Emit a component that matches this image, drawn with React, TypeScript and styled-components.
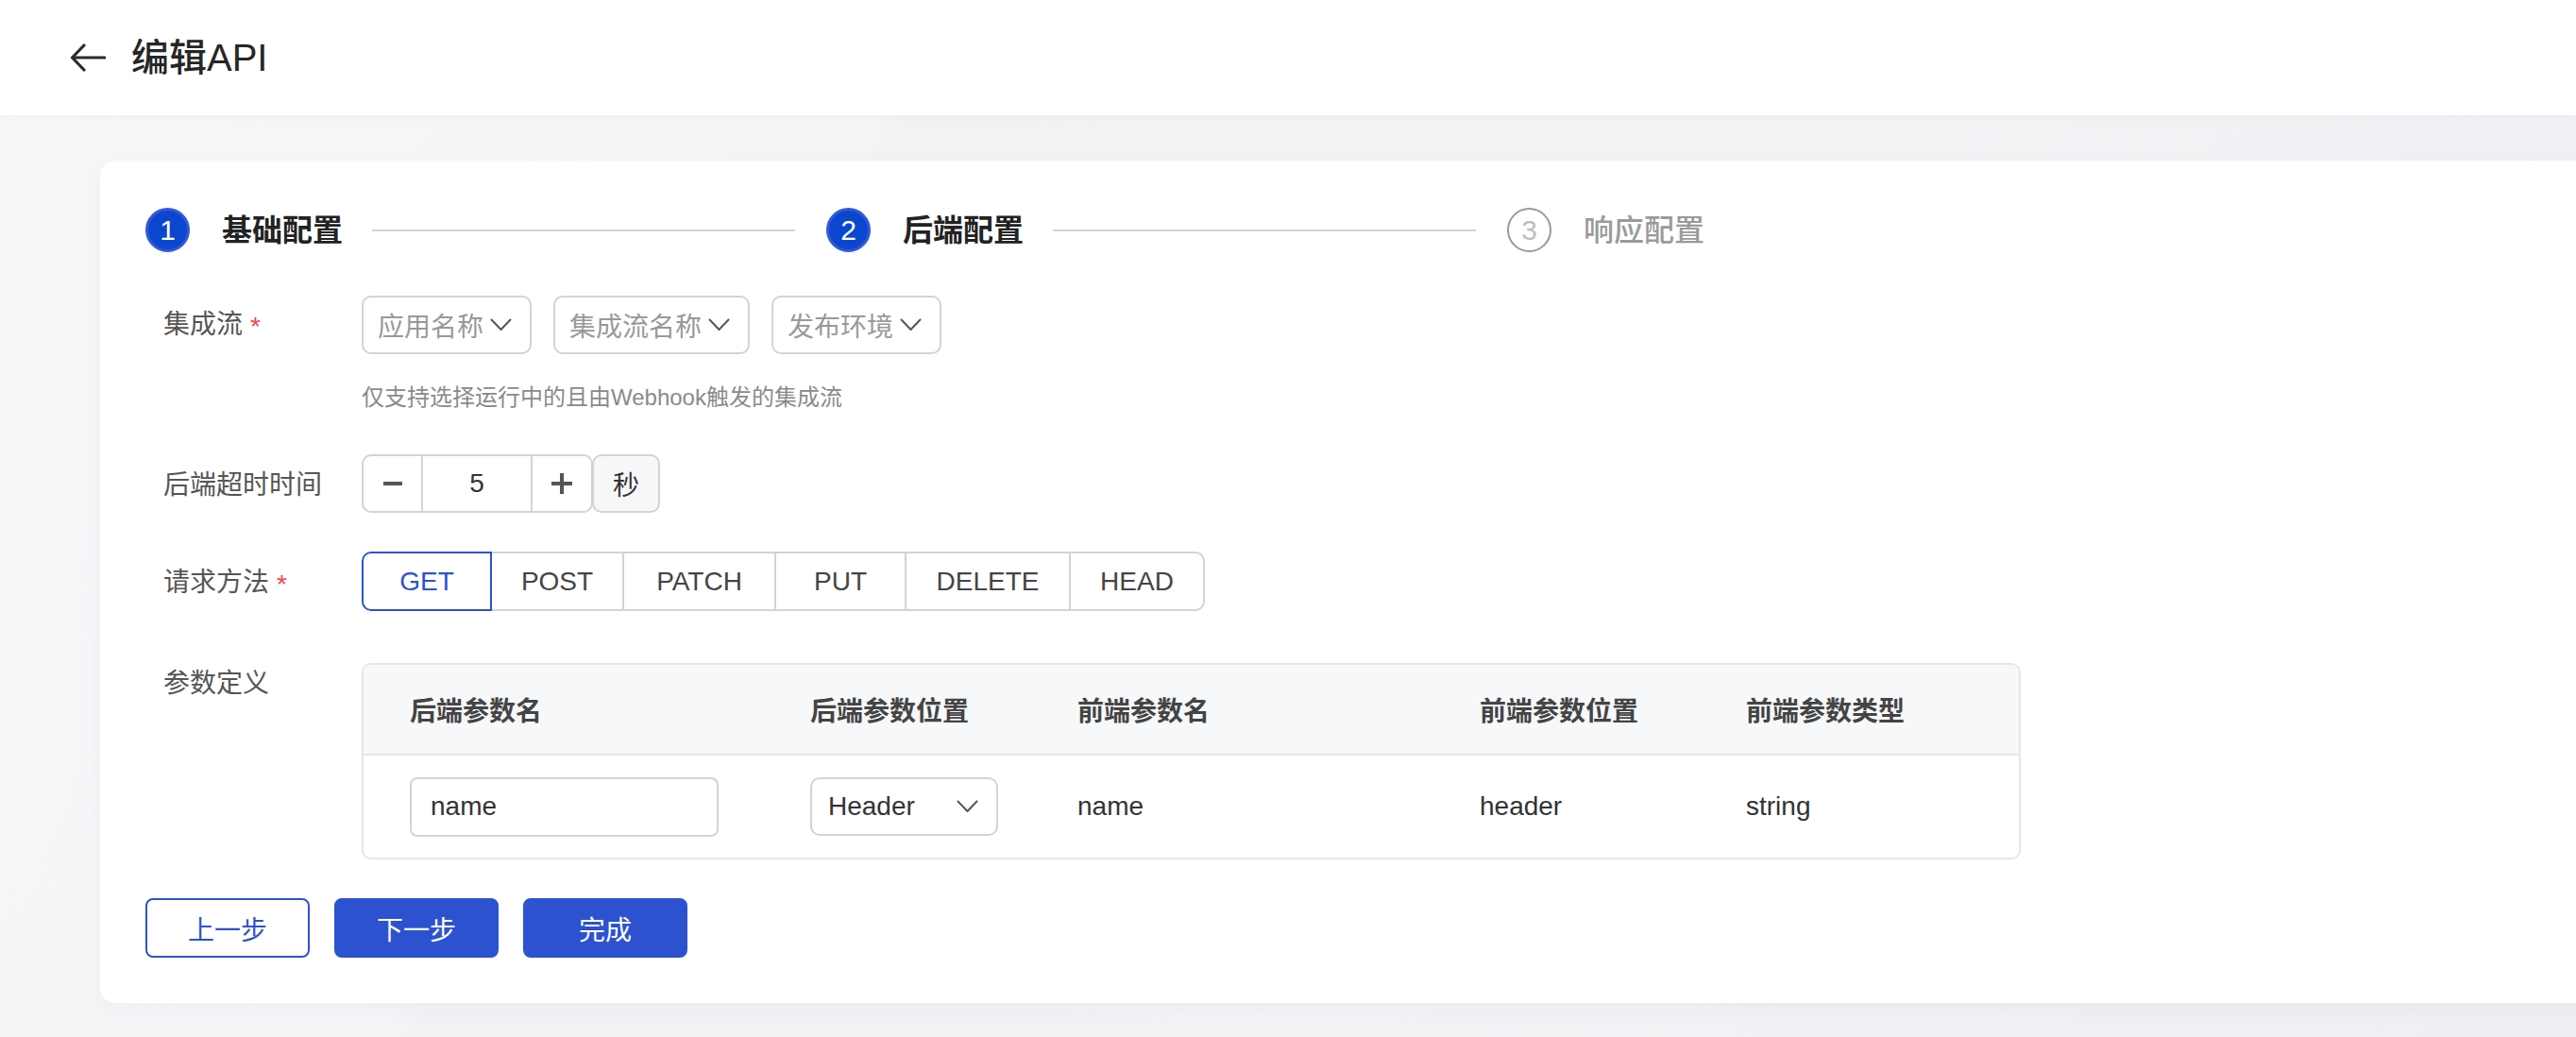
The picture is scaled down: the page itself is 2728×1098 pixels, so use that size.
import React from "react";
import styled, { createGlobalStyle } from "styled-components";

const FONT = `"Liberation Sans", "Noto Sans CJK SC", sans-serif`;
const BLUE = "#2d52d0";
const BORDER = "#d3d3d6";

const Global = createGlobalStyle`
  html, body { margin: 0; padding: 0; }
  body {
    font-family: ${FONT};
    background: #f3f4f6;
    overflow: hidden;
    width: 2728px;
    height: 1098px;
  }
  * { box-sizing: border-box; }
`;

const Page = styled.div`
  width: 2728px;
  height: 1098px;
  display: flex;
  flex-direction: column;
  background:
    linear-gradient(180deg, rgba(0,0,0,0.035) 0px, rgba(0,0,0,0) 18px),
    linear-gradient(118deg, #f6f7f9 0%, #f4f5f7 30%, #f1f2f4 31%, #f2f3f5 60%, #eeeff2 100%);
`;

const Header = styled.header`
  height: 122px;
  flex: none;
  background: #ffffff;
  display: flex;
  align-items: center;
  gap: 27px;
  padding-left: 74px;
  box-shadow: 0 2px 10px rgba(0, 0, 0, 0.03);
  position: relative;
  z-index: 1;
`;

const Title = styled.h1`
  margin: 0;
  font-size: 40px;
  font-weight: 500;
  color: #262626;
  line-height: 1;
`;

const Main = styled.main`
  flex: 1;
  padding: 48px 0 0 106px;
`;

const Card = styled.section`
  width: calc(100% + 40px);
  background: #ffffff;
  border-radius: 16px;
  padding: 50px 48px 48px 48px;
  box-shadow: 0 6px 24px rgba(30, 40, 80, 0.04);
`;

const Steps = styled.div`
  display: flex;
  align-items: center;
  height: 47px;
`;

const Step = styled.div`
  display: flex;
  align-items: center;
  flex: none;
`;

const StepCircle = styled.div<{ $state: "done" | "active" | "wait" }>`
  width: 47px;
  height: 47px;
  border-radius: 50%;
  display: flex;
  align-items: center;
  justify-content: center;
  font-size: 30px;
  line-height: 1;
  ${(p) =>
    p.$state === "wait"
      ? `background: #fff; border: 2px solid #9a9a9a; color: #bdbdbd;`
      : `background: #0b46cf; border: 3px solid #3559d6; color: #fff;`}
`;

const StepTitle = styled.div<{ $muted?: boolean }>`
  margin-left: 34px;
  font-size: 32px;
  line-height: 40px;
  font-weight: ${(p) => (p.$muted ? 500 : 700)};
  color: ${(p) => (p.$muted ? "#9a9a9a" : "#222")};
  white-space: nowrap;
`;

const StepLine = styled.div`
  width: 448px;
  height: 2px;
  background: #d2d2d2;
  margin: 0 33px 0 31px;
`;

const FormRow = styled.div<{ $mt: number; $top?: boolean }>`
  display: grid;
  grid-template-columns: 229px 1fr;
  align-items: ${(p) => (p.$top ? "start" : "center")};
  margin-top: ${(p) => p.$mt}px;
`;

const Label = styled.div<{ $offset?: number }>`
  padding-left: 19px;
  margin-top: ${(p) => p.$offset ?? 0}px;
  font-size: 28px;
  line-height: 40px;
  color: #555;
  white-space: nowrap;
  display: flex;
  align-items: center;
`;

const Required = styled.span`
  color: #f04848;
  margin-left: 8px;
  font-size: 28px;
  line-height: 1;
  position: relative;
  top: 2px;
`;

const Controls = styled.div`
  display: flex;
  align-items: center;
  gap: 23px;
`;

const SelectBox = styled.div<{ $value?: boolean; $width?: number }>`
  height: 62px;
  ${(p) => (p.$width ? `width: ${p.$width}px;` : "")}
  border: 2px solid ${BORDER};
  border-radius: 10px;
  display: flex;
  align-items: center;
  justify-content: space-between;
  gap: 7px;
  padding: 0 19px 0 ${(p) => (p.$value ? 17 : 15)}px;
  font-size: 28px;
  color: ${(p) => (p.$value ? "#333" : "#999")};
  background: #fff;
  white-space: nowrap;
`;

const Hint = styled.div`
  margin-top: 29px;
  margin-left: 229px;
  font-size: 24px;
  line-height: 34px;
  color: #8a8a8a;
`;

const Stepper = styled.div`
  display: flex;
  align-items: stretch;
  height: 62px;
`;

const StepperBody = styled.div`
  display: flex;
  border: 2px solid ${BORDER};
  border-radius: 10px;
  overflow: hidden;
  background: #fff;
`;

const StepperBtn = styled.div<{ $w: number }>`
  width: ${(p) => p.$w}px;
  display: flex;
  align-items: center;
  justify-content: center;
  color: #555;
`;

const StepperValue = styled.div`
  width: 118px;
  border-left: 2px solid ${BORDER};
  border-right: 2px solid ${BORDER};
  display: flex;
  align-items: center;
  justify-content: center;
  font-size: 28px;
  color: #333;
`;

const Addon = styled.div`
  width: 72px;
  margin-left: -1px;
  border: 2px solid ${BORDER};
  border-radius: 10px;
  background: #f7f7f9;
  display: flex;
  align-items: center;
  justify-content: center;
  font-size: 28px;
  color: #333;
`;

const RadioGroup = styled.div`
  display: flex;
  height: 63px;
`;

const RadioBtn = styled.div<{ $w: number; $active?: boolean; $first?: boolean; $last?: boolean }>`
  width: ${(p) => p.$w}px;
  display: flex;
  align-items: center;
  justify-content: center;
  font-size: 28px;
  color: ${(p) => (p.$active ? BLUE : "#444")};
  border: 2px solid ${(p) => (p.$active ? BLUE : BORDER)};
  margin-left: ${(p) => (p.$first ? 0 : -2)}px;
  position: relative;
  z-index: ${(p) => (p.$active ? 1 : 0)};
  background: #fff;
  border-radius: ${(p) => (p.$first ? "10px 0 0 10px" : p.$last ? "0 10px 10px 0" : "0")};
`;

const Table = styled.div`
  width: 1757px;
  border: 2px solid #e6e6e8;
  border-radius: 10px;
  overflow: hidden;
`;

const TRow = styled.div<{ $head?: boolean }>`
  display: grid;
  grid-template-columns: 424px 283px 426px 282px 1fr;
  align-items: center;
  height: ${(p) => (p.$head ? 96 : 108)}px;
  background: ${(p) => (p.$head ? "#f7f8fa" : "#fff")};
  ${(p) => (p.$head ? "border-bottom: 2px solid #e6e6e8;" : "")}
`;

const Cell = styled.div<{ $head?: boolean }>`
  padding-left: 49px;
  font-size: 28px;
  font-weight: ${(p) => (p.$head ? 700 : 400)};
  color: ${(p) => (p.$head ? "#444" : "#333")};
  white-space: nowrap;
`;

const TextInput = styled.div`
  width: 327px;
  height: 63px;
  border: 2px solid ${BORDER};
  border-radius: 8px;
  display: flex;
  align-items: center;
  padding-left: 20px;
  font-size: 28px;
  color: #333;
`;

const Actions = styled.div`
  display: flex;
  gap: 26px;
  margin-top: 41px;
`;

const Button = styled.button<{ $primary?: boolean }>`
  width: 174px;
  height: 63px;
  border-radius: 8px;
  font-family: ${FONT};
  font-size: 28px;
  cursor: pointer;
  border: 2px solid ${BLUE};
  background: ${(p) => (p.$primary ? BLUE : "#fff")};
  color: ${(p) => (p.$primary ? "#fff" : BLUE)};
`;

const Chevron = () => (
  <svg width="23" height="14" viewBox="0 0 23 14" fill="none">
    <path d="M1.5 1.5 L11.5 12 L21.5 1.5" stroke="#555" strokeWidth="2" strokeLinejoin="round" strokeLinecap="round" />
  </svg>
);

const BackArrow = () => (
  <svg width="38" height="30" viewBox="0 0 38 30" fill="none">
    <path d="M37 15 H3" stroke="#2b2b2b" strokeWidth="3.2" strokeLinecap="round" />
    <path d="M15 2 L2.5 15 L15 28" stroke="#2b2b2b" strokeWidth="3.2" strokeLinecap="round" strokeLinejoin="round" />
  </svg>
);

const Minus = () => (
  <svg width="22" height="22" viewBox="0 0 22 22">
    <path d="M1 11 H21" stroke="#555" strokeWidth="4" />
  </svg>
);

const Plus = () => (
  <svg width="24" height="24" viewBox="0 0 24 24">
    <path d="M1 12 H23 M12 1 V23" stroke="#555" strokeWidth="4" />
  </svg>
);

const methods = [
  { name: "GET", w: 138 },
  { name: "POST", w: 142 },
  { name: "PATCH", w: 163 },
  { name: "PUT", w: 140 },
  { name: "DELETE", w: 176 },
  { name: "HEAD", w: 144 },
];

export default function App() {
  return (
    <>
      <Global />
      <Page>
        <Header>
          <BackArrow />
          <Title>编辑API</Title>
        </Header>
        <Main>
          <Card>
            <Steps>
              <Step>
                <StepCircle $state="done">1</StepCircle>
                <StepTitle>基础配置</StepTitle>
                <StepLine />
              </Step>
              <Step>
                <StepCircle $state="active">2</StepCircle>
                <StepTitle>后端配置</StepTitle>
                <StepLine />
              </Step>
              <Step>
                <StepCircle $state="wait">3</StepCircle>
                <StepTitle $muted>响应配置</StepTitle>
              </Step>
            </Steps>

            <FormRow $mt={46}>
              <Label>
                集成流<Required>*</Required>
              </Label>
              <Controls>
                <SelectBox>
                  应用名称
                  <Chevron />
                </SelectBox>
                <SelectBox>
                  集成流名称
                  <Chevron />
                </SelectBox>
                <SelectBox>
                  发布环境
                  <Chevron />
                </SelectBox>
              </Controls>
            </FormRow>
            <Hint>仅支持选择运行中的且由Webhook触发的集成流</Hint>

            <FormRow $mt={43}>
              <Label $offset={4}>后端超时时间</Label>
              <Stepper>
                <StepperBody>
                  <StepperBtn $w={61}>
                    <Minus />
                  </StepperBtn>
                  <StepperValue>5</StepperValue>
                  <StepperBtn $w={62}>
                    <Plus />
                  </StepperBtn>
                </StepperBody>
                <Addon>秒</Addon>
              </Stepper>
            </FormRow>

            <FormRow $mt={41}>
              <Label $offset={2}>
                请求方法<Required>*</Required>
              </Label>
              <RadioGroup>
                {methods.map((m, i) => (
                  <RadioBtn
                    key={m.name}
                    $w={m.w}
                    $active={i === 0}
                    $first={i === 0}
                    $last={i === methods.length - 1}
                  >
                    {m.name}
                  </RadioBtn>
                ))}
              </RadioGroup>
            </FormRow>

            <FormRow $mt={55} $top>
              <Label $offset={2}>参数定义</Label>
              <Table>
                <TRow $head>
                  <Cell $head>后端参数名</Cell>
                  <Cell $head>后端参数位置</Cell>
                  <Cell $head>前端参数名</Cell>
                  <Cell $head>前端参数位置</Cell>
                  <Cell $head>前端参数类型</Cell>
                </TRow>
                <TRow>
                  <Cell>
                    <TextInput>name</TextInput>
                  </Cell>
                  <Cell>
                    <SelectBox $value $width={199}>
                      Header
                      <Chevron />
                    </SelectBox>
                  </Cell>
                  <Cell>name</Cell>
                  <Cell>header</Cell>
                  <Cell>string</Cell>
                </TRow>
              </Table>
            </FormRow>

            <Actions>
              <Button>上一步</Button>
              <Button $primary>下一步</Button>
              <Button $primary>完成</Button>
            </Actions>
          </Card>
        </Main>
      </Page>
    </>
  );
}
